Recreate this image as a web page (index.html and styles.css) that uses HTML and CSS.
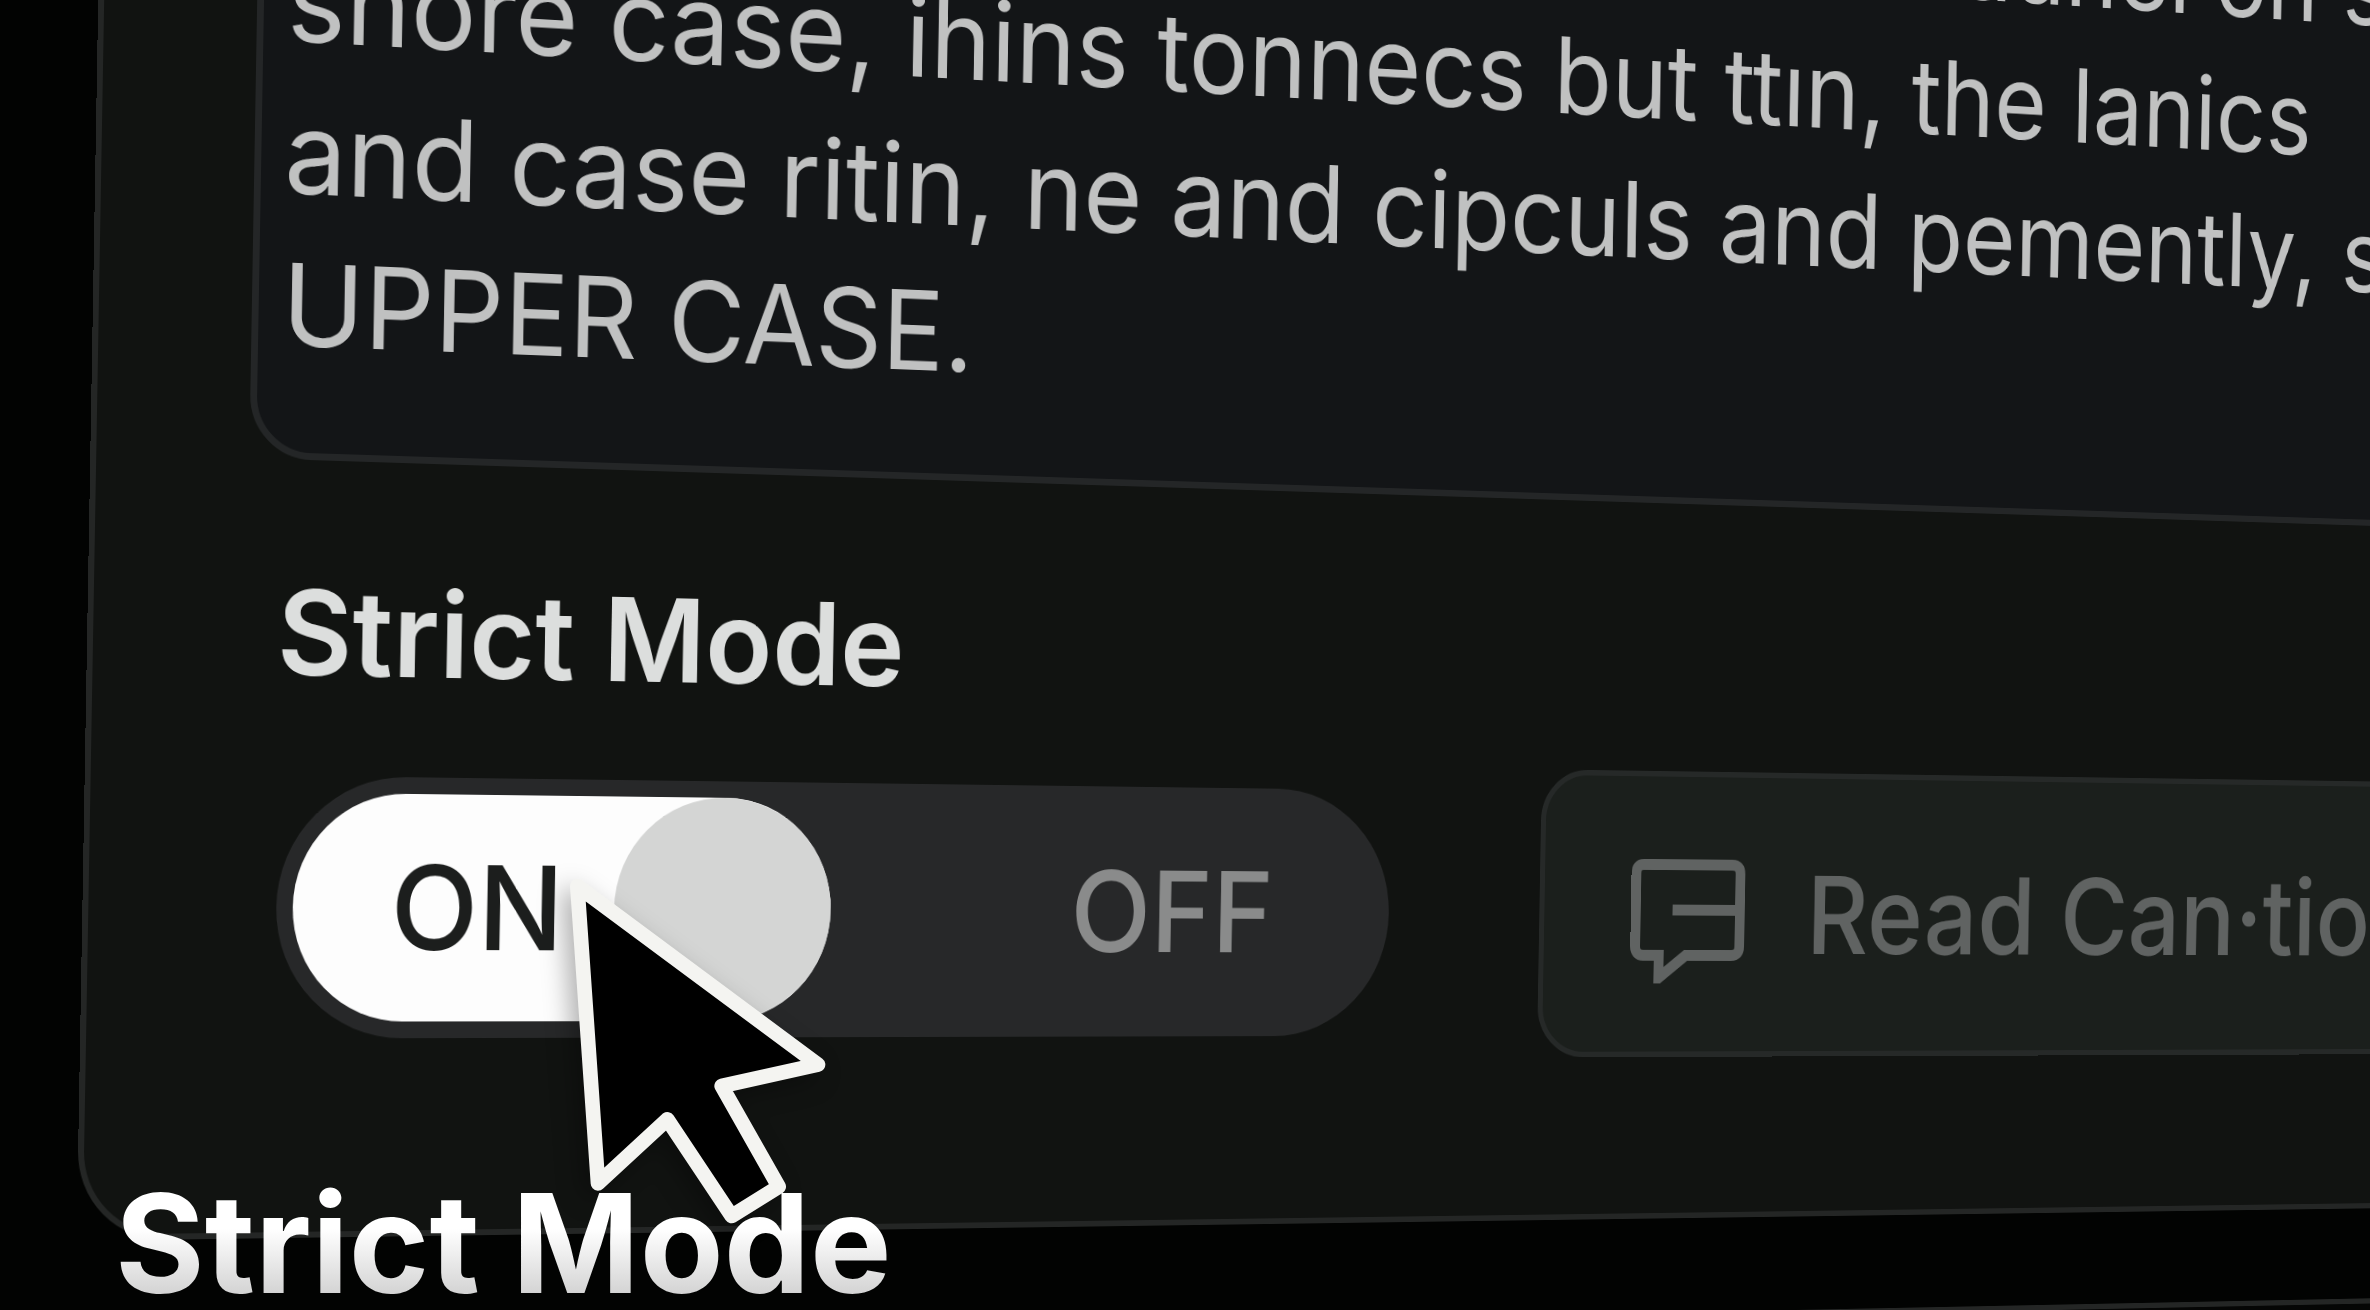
FILE: index.html
```html
<!DOCTYPE html>
<html lang="en">
<head>
    <meta charset="UTF-8">
    <meta name="viewport" content="width=device-width, initial-scale=1.0">
    <title>Strict Mode</title>
    <link rel="stylesheet" href="styles.css">
</head>
<body>
    <main class="scene">
        <div class="stage">
            <section class="panel">
                <textarea class="prompt" aria-label="Prompt" wrap="off" readonly>in aunel on s
shore case, ihins tonnecs but ttın, the lanics
and case ritin, ne and cipculs and pemently, s
UPPER CASE.</textarea>
                <label class="setting-label" for="strict-mode">Strict Mode</label>
                <div class="controls">
                    <label class="switch">
                        <input type="checkbox" id="strict-mode" class="switch-input" checked>
                        <span class="switch-on">ON<span class="switch-knob"></span></span>
                        <span class="switch-off">OFF</span>
                    </label>
                    <button type="button" class="read-button">
                        <svg class="read-icon" viewBox="0 0 142 138" aria-hidden="true">
                            <path d="M16 7H125Q135 7 135 17V97Q135 107 125 107H69L36 132V107H17Q7 107 7 97V17Q7 7 16 7ZM52 57H133"/>
                        </svg>
                        <span>Read Can·tion</span>
                    </button>
                </div>
            </section>
            <section class="panel panel-next"></section>
        </div>
        <svg class="cursor" viewBox="0 0 960 1200" aria-hidden="true">
            <path d="M112 78L834 614L545 678L716 980L575 1068L382 778L174 970Z"/>
        </svg>
        <p class="caption">Strict Mode</p>
    </main>
</body>
</html>
```
FILE: styles.css
```css
body {
    margin: 0;
    background-color: #020302;
    color: #c8c8c8;
    font-family: Inter, "Liberation Sans", sans-serif;
    font-size: 120px;
    line-height: 140px;
}
.scene {
    position: relative;
    height: 100vh;
    overflow: hidden;
    perspective: 2400px;
    perspective-origin: 90px 700px;
}
/* the whole panel leans away to the right */
.stage {
    display: flow-root;
    width: 140%;
    margin-top: -400px;
    margin-left: 86px;
    transform-origin: 0 1100px;
    transform: rotateZ(1deg) rotateY(8deg);
}
.panel {
    box-sizing: border-box;
    padding: 115px 0 172px 156px;
    background-color: #111311;
    border: 6px solid #242625;
    border-radius: 90px;
}
.panel-next {
    height: 400px;
    margin-top: 104px;
    background-color: #050605;
}
.prompt {
    display: block;
    box-sizing: border-box;
    width: 100%;
    height: 732px;
    padding: 30px 24px;
    background-color: #131517;
    border: 7px solid #242627;
    border-radius: 64px;
    color: #c0c1c1;
    font: inherit;
    font-size: 115px;
    line-height: 154px;
    text-indent: 1790px;
    white-space: pre;
    overflow: hidden;
    resize: none;
    outline: none;
}
.setting-label {
    display: block;
    margin: 105px 0 50px 32px;
    color: #dcdedd;
    font-weight: 600;
}
.controls {
    display: flex;
    align-items: center;
    gap: 180px;
    margin-left: 36px;
}
.switch {
    display: flex;
    box-sizing: border-box;
    width: 1230px;
    height: 266px;
    padding: 17px;
    background-color: #272829;
    border-radius: 133px;
    font-weight: 500;
    cursor: pointer;
}
.switch-input {
    position: absolute;
    opacity: 0;
}
.switch-on {
    display: flex;
    align-items: center;
    justify-content: space-between;
    box-sizing: border-box;
    width: 575px;
    padding-left: 102px;
    background-color: #fdfdfd;
    border-radius: 116px;
    color: #1c1e1d;
}
.switch-knob {
    width: 236px;
    height: 100%;
    background-color: #d4d5d4;
    border-radius: 50%;
}
.switch-off {
    display: flex;
    flex: 1;
    align-items: center;
    justify-content: center;
    padding-left: 150px;
    color: #8a8b8b;
}
.read-button {
    display: flex;
    flex: 1;
    align-items: center;
    gap: 76px;
    box-sizing: border-box;
    height: 315px;
    padding: 0 104px;
    background-color: #1b1f1c;
    border: 6px solid #262928;
    border-radius: 56px;
    color: #606362;
    font: inherit;
    font-weight: 500;
    white-space: nowrap;
    cursor: pointer;
}
.read-icon {
    flex: none;
    width: 142px;
    height: 138px;
    margin-top: 14px;
    fill: none;
    stroke: #606362;
    stroke-width: 12px;
}
.cursor {
    position: absolute;
    top: 860px;
    left: 540px;
    width: 320px;
    height: 400px;
    overflow: visible;
    fill: #000000;
    stroke: #f4f4f1;
    stroke-width: 44px;
    stroke-linejoin: round;
    filter: drop-shadow(-8px 8px 12px rgba(0, 0, 0, 0.3));
}
.caption {
    position: absolute;
    bottom: -3px;
    left: 115px;
    margin: 0;
    background: linear-gradient(#ffffff 40%, #d0d0d0 90%);
    background-clip: text;
    -webkit-background-clip: text;
    color: transparent;
    font-size: 137px;
    font-weight: 700;
}
```
